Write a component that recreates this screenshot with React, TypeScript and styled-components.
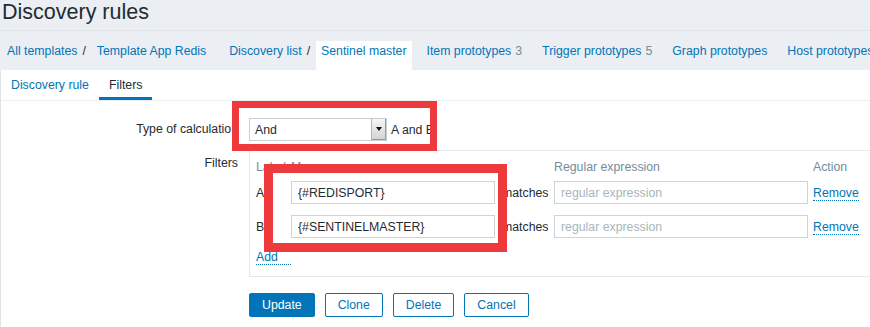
import React from 'react'
import styled, { createGlobalStyle } from 'styled-components'

// Zabbix-like "Discovery rules" filter form, with two red annotation frames on top

const LINK = '#0275b8'
const TEXT = '#1f2c33'
const MUTED = '#768d99'

const GlobalStyle = createGlobalStyle`
  html, body {
    margin: 0;
    padding: 0;
    background: #ebeef2;
    overflow: hidden;
  }
  body {
    font-family: "Liberation Sans", Arial, sans-serif;
    font-size: 12.3px;
    color: ${TEXT};
  }
`

const Page = styled.div`
  position: relative;
  display: flex;
  flex-direction: column;
  width: 870px;
  height: 327px;
  overflow: hidden;
`

const Title = styled.h1`
  margin: 0;
  height: 31px;
  box-sizing: border-box;
  padding-left: 2px;
  font-size: 21.5px;
  font-weight: normal;
  line-height: 24px;
  border-bottom: 1px solid #e1e5ea;
`

const NavRow = styled.div`
  display: flex;
  align-items: stretch;
  height: 39px;
  padding-left: 2px;
  white-space: nowrap;
  line-height: 14px;
`

const Crumbs = styled.div<{ $after: number }>`
  display: flex;
  align-items: stretch;
  margin-right: ${(p) => p.$after}px;
`

const Crumb = styled.span<{ $selected?: boolean }>`
  color: ${LINK};
  padding: ${(p) => (p.$selected ? '3px 5px 0' : '13px 5px 0')};
  margin-top: ${(p) => (p.$selected ? '10px' : '0')};
  background: ${(p) => (p.$selected ? '#fff' : 'transparent')};
`

const Sep = styled.span`
  padding-top: 13px;
  margin-right: 6px;
  color: ${TEXT};
`

const NavLink = styled.span`
  padding-top: 13px;
  margin-right: 20px;
  color: ${LINK};
`

const Count = styled.span`
  color: ${MUTED};
  margin-left: 4px;
`

const Content = styled.div`
  flex: 1;
  background: #fff;
  border-left: 1px solid #dfe4e7;
`

const TabList = styled.div`
  display: flex;
  height: 31px;
  box-sizing: border-box;
  border-bottom: 1px solid #ebeef2;
`

const Tab = styled.span<{ $active?: boolean }>`
  padding: 0 10px;
  line-height: 30px;
  color: ${(p) => (p.$active ? TEXT : LINK)};
  box-shadow: ${(p) => (p.$active ? `inset 0 -3px 0 ${LINK}` : 'none')};
`

const Form = styled.div`
  display: grid;
  grid-template-columns: 237px auto;
  column-gap: 11px;
  row-gap: 9px;
  padding-top: 17px;
  align-items: start;
`

const Label = styled.div<{ $top?: boolean }>`
  text-align: right;
  white-space: nowrap;
  line-height: ${(p) => (p.$top ? '14px' : '23px')};
  padding-top: ${(p) => (p.$top ? '6px' : '0')};
`

const Field = styled.div`
  display: flex;
  align-items: center;
  white-space: nowrap;
`

const Select = styled.div`
  display: flex;
  align-items: center;
  width: 138px;
  height: 23px;
  box-sizing: border-box;
  border: 1px solid #c9d0d4;
  padding-left: 5px;
  background: #fff;
`

const SelectArrow = styled.span`
  display: flex;
  align-items: center;
  justify-content: center;
  margin-left: auto;
  width: 15px;
  height: 21px;
  box-sizing: border-box;
  background: linear-gradient(#f6f6f6, #d4d4d4);
  border-left: 1px solid #b5b5b5;
  border-right: 1px solid #9a9a9a;
  border-bottom: 1px solid #9a9a9a;

  &::before {
    content: '';
    border-left: 3.5px solid transparent;
    border-right: 3.5px solid transparent;
    border-top: 4px solid #111;
  }
`

const Expression = styled.span`
  margin-left: 4px;
`

const FilterBox = styled.div`
  width: 640px;
  border: 1px solid #e4e8ec;
  padding: 4px 0 11px 6px;
`

const FilterRow = styled.div<{ $height: number; $gap: number }>`
  display: grid;
  grid-template-columns: 35px 204px 59px 254px auto;
  align-items: center;
  height: ${(p) => p.$height}px;
  margin-top: ${(p) => p.$gap}px;
  white-space: nowrap;
`

const HeadCell = styled.span`
  color: ${MUTED};
`

const Input = styled.input`
  width: 100%;
  height: 23px;
  box-sizing: border-box;
  margin: 0;
  border: 1px solid #cdd4d8;
  padding: 0 6px;
  font: inherit;
  color: ${TEXT};
  background: #fff;
  outline: none;

  &::placeholder {
    color: #a9b5bb;
  }
`

const Operator = styled.span`
  padding-left: 7px;
`

const ActionCell = styled.span`
  padding-left: 5px;
`

const DottedLink = styled.span`
  color: ${LINK};
  border-bottom: 1px dotted ${LINK};
`

const Buttons = styled.div`
  display: flex;
  gap: 10px;
  margin-top: 7px;
`

const Button = styled.button<{ $primary?: boolean }>`
  height: 24px;
  padding: 0 12px;
  margin: 0;
  font: inherit;
  border: 1px solid ${LINK};
  border-radius: 2px;
  background: ${(p) => (p.$primary ? LINK : '#fff')};
  color: ${(p) => (p.$primary ? '#fff' : LINK)};
`

const Annotation = styled.div<{ $left: number; $top: number; $w: number; $h: number; $b: number }>`
  position: absolute;
  left: ${(p) => p.$left}px;
  top: ${(p) => p.$top}px;
  width: ${(p) => p.$w}px;
  height: ${(p) => p.$h}px;
  box-sizing: border-box;
  border: ${(p) => p.$b}px solid #ef3a3d;
  pointer-events: none;
`

const filters = [
  { id: 'A', macro: '{#REDISPORT}', gap: 2 },
  { id: 'B', macro: '{#SENTINELMASTER}', gap: 11 },
]

export default function App() {
  return (
    <Page>
      <GlobalStyle />
      <Title>Discovery rules</Title>

      <NavRow>
        <Crumbs $after={13}>
          <Crumb>All templates</Crumb>
          <Sep>/</Sep>
          <Crumb>Template App Redis</Crumb>
        </Crumbs>
        <Crumbs $after={15}>
          <Crumb>Discovery list</Crumb>
          <Sep>/</Sep>
          <Crumb $selected>Sentinel master</Crumb>
        </Crumbs>
        <NavLink>
          Item prototypes<Count>3</Count>
        </NavLink>
        <NavLink>
          Trigger prototypes<Count>5</Count>
        </NavLink>
        <NavLink>Graph prototypes</NavLink>
        <NavLink>Host prototypes</NavLink>
      </NavRow>

      <Content>
        <TabList>
          <Tab>Discovery rule</Tab>
          <Tab $active>Filters</Tab>
        </TabList>

        <Form>
          <Label>Type of calculation</Label>
          <Field>
            <Select>
              And
              <SelectArrow />
            </Select>
            <Expression>A and B</Expression>
          </Field>

          <Label $top>Filters</Label>
          <FilterBox>
            <FilterRow $height={24} $gap={0}>
              <HeadCell>Label</HeadCell>
              <HeadCell>Macro</HeadCell>
              <span />
              <HeadCell>Regular expression</HeadCell>
              <ActionCell>
                <HeadCell>Action</HeadCell>
              </ActionCell>
            </FilterRow>
            {filters.map((f) => (
              <FilterRow key={f.id} $height={23} $gap={f.gap}>
                <span>{f.id}</span>
                <Input readOnly value={f.macro} />
                <Operator>matches</Operator>
                <Input readOnly placeholder="regular expression" />
                <ActionCell>
                  <DottedLink>Remove</DottedLink>
                </ActionCell>
              </FilterRow>
            ))}
            <FilterRow $height={16} $gap={11}>
              <DottedLink>Add</DottedLink>
            </FilterRow>
          </FilterBox>

          <span />
          <Buttons>
            <Button $primary>Update</Button>
            <Button>Clone</Button>
            <Button>Delete</Button>
            <Button>Cancel</Button>
          </Buttons>
        </Form>
      </Content>

      <Annotation $left={232} $top={101} $w={205} $h={50} $b={7} />
      <Annotation $left={264} $top={164} $w={243} $h={88} $b={9} />
    </Page>
  )
}
